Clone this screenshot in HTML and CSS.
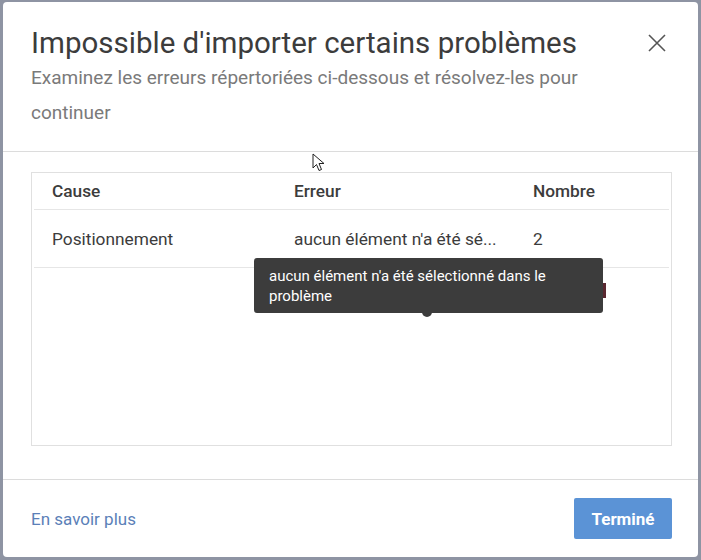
FILE: index.html
```html
<!DOCTYPE html>
<html lang="fr">
<head>
<meta charset="utf-8">
<link rel="stylesheet" href="styles.css">
</head>
<body>
<div class="modal">
  <div class="header">
    <div class="title-row">
      <h1 class="title">Impossible d'importer certains problèmes</h1>
      <button class="close" aria-label="Fermer">
        <svg width="18" height="18" viewBox="0 0 18 18"><path d="M1 1 L17 17 M17 1 L1 17" stroke="#555" stroke-width="1.6" fill="none"/></svg>
      </button>
    </div>
    <p class="subtitle">Examinez les erreurs répertoriées ci-dessous et résolvez-les pour continuer</p>
  </div>
  <div class="body">
    <div class="table-box">
      <div class="row head">
        <div class="cell">Cause</div>
        <div class="cell">Erreur</div>
        <div class="cell">Nombre</div>
      </div>
      <div class="row">
        <div class="cell">Positionnement</div>
        <div class="cell">aucun élément n'a été sé...</div>
        <div class="cell">2</div>
      </div>
      <span class="redmark"></span>
      <div class="tooltip">aucun élément n'a été sélectionné dans le problème</div>
    </div>
  </div>
  <div class="footer">
    <a class="link" href="#">En savoir plus</a>
    <button class="done">Terminé</button>
  </div>
  <svg class="cursor" width="14" height="20" viewBox="0 0 14 20"><path d="M1 1 L1 15 L4.5 11.5 L7 17.5 L9.5 16.5 L7 10.5 L12 10.5 Z" fill="#fff" stroke="#222" stroke-width="1"/></svg>
</div>
</body>
</html>
```
FILE: styles.css
```css
* { box-sizing: border-box; }
html, body { margin: 0; padding: 0; }
body {
  width: 701px;
  height: 560px;
  background: #8e94a3;
  padding: 2px 3px 3px 3px;
  font-family: Roboto, "Liberation Sans", sans-serif;
}
.modal {
  position: relative;
  width: 695px;
  height: 555px;
  background: #fff;
  border-radius: 4px;
  display: flex;
  flex-direction: column;
}
.header {
  height: 150px;
  padding: 24px 28px 0 28px;
  border-bottom: 1px solid #dcdcdc;
}
.title-row {
  display: flex;
  justify-content: space-between;
  align-items: center;
}
.title {
  margin: 0;
  font-size: 29.5px;
  font-weight: 400;
  line-height: 34px;
  color: #3c3c3c;
}
.close {
  border: 0;
  background: none;
  padding: 0;
  margin-right: 4px;
  width: 18px;
  height: 18px;
  display: flex;
}
.subtitle {
  margin: 0;
  max-width: 610px;
  font-size: 19px;
  line-height: 35px;
  color: #7a7a7a;
}
.body {
  flex: 1;
  padding: 20px 26px 33px 28px;
}
.table-box {
  position: relative;
  height: 274px;
  border: 1px solid #e0e0e0;
  padding: 0 2px;
}
.row {
  display: grid;
  grid-template-columns: 242px 239px 1fr;
  height: 58px;
  align-items: center;
  border-bottom: 1px solid #e6e6e6;
  font-size: 17.3px;
  color: #3c3c3c;
}
.row.head {
  height: 37px;
  font-weight: 500;
}
.cell { padding-left: 18px; white-space: nowrap; }
.tooltip {
  position: absolute;
  left: 222px;
  top: 85px;
  width: 349px;
  height: 55px;
  background: #3c3c3c;
  border-radius: 3px;
  color: #fff;
  font-size: 15px;
  line-height: 20px;
  padding: 8px 15px 7px 15px;
}
.tooltip::after {
  content: "";
  position: absolute;
  left: 168px;
  bottom: -4px;
  width: 10px;
  height: 5px;
  background: #3c3c3c;
  border-radius: 0 0 5px 5px;
}
.redmark {
  position: absolute;
  left: 571px;
  top: 110px;
  width: 3px;
  height: 15px;
  background: #5a2830;
}
.footer {
  height: 78px;
  border-top: 1px solid #dcdcdc;
  display: flex;
  align-items: center;
  justify-content: space-between;
  padding: 0 26px 0 28px;
}
.link {
  color: #5b7fb8;
  text-decoration: none;
  font-size: 17px;
}
.done {
  width: 98px;
  height: 41px;
  border: 0;
  border-radius: 2px;
  background: #5b93d6;
  color: #fff;
  font-family: inherit;
  font-size: 17px;
  font-weight: 700;
}
.cursor {
  position: absolute;
  left: 309px;
  top: 151px;
}
```
